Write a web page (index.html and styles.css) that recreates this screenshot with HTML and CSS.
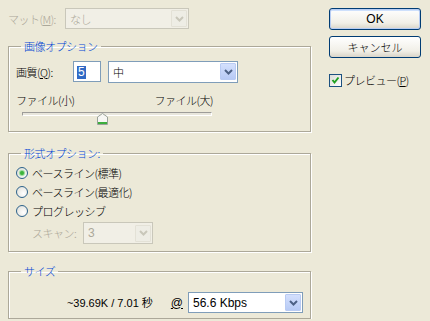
FILE: index.html
```html
<!DOCTYPE html>
<html lang="ja">
<head>
    <meta charset="UTF-8" />
    <title>JPEG オプション</title>
    <link rel="stylesheet" href="styles.css">
</head>
<body>
    <div class="dialog">
        <div class="main">
            <div class="row mat">
                <span class="label disabled">マット(<u>M</u>):</span>
                <div class="select is-disabled mat-select">
                    <span class="value">なし</span>
                    <span class="arrow">
                        <svg width="9" height="6" viewBox="0 0 9 6"><polyline points="1,1 4.5,4.5 8,1" fill="none" stroke="#c9c7ba" stroke-width="2"/></svg>
                    </span>
                </div>
            </div>

            <fieldset class="group group-image">
                <legend>画像オプション</legend>
                <div class="row quality">
                    <span class="label">画質(<u>Q</u>):</span>
                    <div class="textbox"><span class="selected latin">5</span></div>
                    <div class="select quality-select">
                        <span class="value">中</span>
                        <span class="arrow">
                            <svg width="9" height="6" viewBox="0 0 9 6"><polyline points="1,1 4.5,4.5 8,1" fill="none" stroke="#4d6185" stroke-width="2"/></svg>
                        </span>
                    </div>
                </div>
                <div class="size-labels">
                    <span>ファイル(小)</span>
                    <span>ファイル(大)</span>
                </div>
                <div class="slider">
                    <div class="track"></div>
                    <svg class="thumb" width="11" height="12" viewBox="0 0 11 12">
                        <path d="M0.5,4 L5.5,0.5 L10.5,4 V11.5 H0.5 Z" fill="#f7f7f4" stroke="#9aa29a"/>
                        <rect x="1" y="9" width="9" height="2" fill="#3dae3d"/>
                    </svg>
                </div>
            </fieldset>

            <fieldset class="group group-format">
                <legend>形式オプション:</legend>
                <div class="radio-row">
                    <span class="radio checked"></span>
                    <span>ベースライン(標準)</span>
                </div>
                <div class="radio-row">
                    <span class="radio"></span>
                    <span>ベースライン(最適化)</span>
                </div>
                <div class="radio-row">
                    <span class="radio"></span>
                    <span>プログレッシブ</span>
                </div>
                <div class="row scan">
                    <span class="label disabled">スキャン:</span>
                    <div class="select is-disabled scan-select">
                        <span class="value latin">3</span>
                        <span class="arrow">
                            <svg width="9" height="6" viewBox="0 0 9 6"><polyline points="1,1 4.5,4.5 8,1" fill="none" stroke="#c9c7ba" stroke-width="2"/></svg>
                        </span>
                    </div>
                </div>
            </fieldset>

            <fieldset class="group group-size">
                <legend>サイズ</legend>
                <div class="row estimate">
                    <span class="latin estimate-text">~39.69K / 7.01 秒</span>
                    <span class="latin at"><u>@</u></span>
                    <div class="select speed-select">
                        <span class="value latin">56.6 Kbps</span>
                        <span class="arrow">
                            <svg width="9" height="6" viewBox="0 0 9 6"><polyline points="1,1 4.5,4.5 8,1" fill="none" stroke="#4d6185" stroke-width="2"/></svg>
                        </span>
                    </div>
                </div>
            </fieldset>
        </div>

        <div class="side">
            <button class="btn btn-default latin">OK</button>
            <button class="btn">キャンセル</button>
            <div class="check-row">
                <span class="checkbox">
                    <svg width="9" height="9" viewBox="0 0 9 9"><polyline points="1.5,4 3.5,6.5 7.5,1.5" fill="none" stroke="#21a121" stroke-width="2"/></svg>
                </span>
                <span>プレビュー(<u>P</u>)</span>
            </div>
        </div>
    </div>
</body>
</html>
```

FILE: styles.css
```css
:root {
    --face: #ece9d8;
    --etch-dark: #aca899;
    --legend: #0046d5;
    --disabled: #aca899;
    --field-border: #7f9db9;
    --button-border: #003c74;
}

body {
    margin: 0;
    background: var(--face);
    font-family: "Noto Sans CJK JP", "Liberation Sans", sans-serif;
    font-size: 11px;
    font-weight: 300;
    line-height: 14px;
    color: #000;
    letter-spacing: -0.5px;
}

.latin {
    font-family: "Liberation Sans", "Noto Sans CJK JP", sans-serif;
    font-size: 12px;
    font-weight: 400;
    letter-spacing: 0;
}

u {
    text-decoration: underline;
    text-underline-offset: 1px;
}

.dialog {
    display: flex;
    gap: 18px;
    padding: 8px 0 0 8px;
}

.main {
    width: 303px;
}

.row {
    display: flex;
    align-items: center;
}

.disabled {
    color: var(--disabled);
}

/* combo boxes */
.select {
    display: flex;
    align-items: center;
    box-sizing: border-box;
    height: 21px;
    border: 1px solid var(--field-border);
    background: #fff;
    padding: 1px 1px 1px 4px;
}

.select .value {
    flex: 1;
}

.select .arrow {
    display: flex;
    align-items: center;
    justify-content: center;
    box-sizing: border-box;
    width: 16px;
    height: 17px;
    border: 1px solid #b9cbf3;
    border-radius: 1px;
    background: linear-gradient(#d4e0fd, #b7caf5);
}

.select.is-disabled {
    border-color: #c9c7ba;
    background: #f1efe6;
    color: var(--disabled);
}

.select.is-disabled .arrow {
    border-color: #e3e1d6;
    background: #eeede5;
}

.mat {
    height: 21px;
}

.mat .label {
    width: 57px;
}

.mat-select {
    width: 124px;
}

/* group boxes */
.group {
    margin: 0;
    min-width: 0;
    border: 1px solid var(--etch-dark);
    box-shadow: inset 1px 1px #fff, 1px 1px #fff;
}

.group legend {
    padding: 0 3px;
    margin-left: 5px;
    color: var(--legend);
    line-height: 14px;
}

.group-image {
    margin-top: 10px;
    padding: 8px 7px 5px;
}

.quality {
    height: 21px;
}

.quality .label {
    width: 57px;
}

.textbox {
    box-sizing: border-box;
    width: 28px;
    height: 21px;
    border: 1px solid var(--field-border);
    background: #fff;
    padding: 2px 0 0 3px;
}

.selected {
    display: inline-block;
    background: #316ac5;
    color: #fff;
    padding: 0 1px;
    line-height: 13px;
}

.quality-select {
    width: 130px;
    height: 22px;
    margin-left: 7px;
}

.size-labels {
    display: flex;
    justify-content: space-between;
    width: 197px;
    margin-top: 11px;
}

.slider {
    position: relative;
    width: 190px;
    height: 14px;
    margin-left: 6px;
}

.track {
    box-sizing: border-box;
    height: 4px;
    margin-top: 5px;
    border-top: 1px solid #9d9c99;
    border-left: 1px solid #9d9c99;
    border-bottom: 1px solid #fff;
    border-right: 1px solid #fff;
    background: #e8e6dc;
}

.thumb {
    position: absolute;
    left: 75px;
    top: 1px;
}

.group-format {
    margin-top: 14px;
    padding: 3px 7px 7px;
}

.radio-row {
    display: flex;
    align-items: center;
    gap: 4px;
    height: 19px;
}

.radio {
    box-sizing: border-box;
    width: 12px;
    height: 12px;
    border: 1px solid #2c628b;
    border-radius: 50%;
    background: radial-gradient(circle at 65% 65%, #fff, #dcdcd5);
    display: flex;
    align-items: center;
    justify-content: center;
}

.radio.checked::after {
    content: "";
    width: 4px;
    height: 4px;
    border-radius: 50%;
    background: #3cb43c;
    box-shadow: 0 0 1px 1px #8fd88f;
}

.scan {
    margin-top: 2px;
    padding-left: 16px;
}

.scan .label {
    width: 51px;
}

.scan-select {
    width: 70px;
    height: 22px;
}

.group-size {
    margin-top: 12px;
    padding: 14px 7px 5px;
}

.estimate {
    justify-content: flex-end;
}

.estimate-text {
    font-size: 11px;
    margin-right: 18px;
}

.at {
    margin-right: 5px;
}

.speed-select {
    width: 115px;
}

/* right column */
.side {
    display: flex;
    flex-direction: column;
    width: 92px;
}

.btn {
    height: 22px;
    padding: 0;
    border: 1px solid var(--button-border);
    border-radius: 3px;
    background: linear-gradient(#ffffff, #f1efe7 70%, #d9d4c8);
    font: inherit;
    color: #000;
}

.btn + .btn {
    margin-top: 6px;
}

.btn-default {
    font-family: "Liberation Sans", sans-serif;
    font-size: 12px;
    font-weight: 400;
    letter-spacing: 0;
    box-shadow: inset 0 0 0 1px #b8cdf3, inset 0 1px 0 1px #cee0fc;
}

.check-row {
    display: flex;
    align-items: center;
    gap: 2px;
    margin-top: 15px;
}

.checkbox {
    box-sizing: border-box;
    display: flex;
    align-items: center;
    justify-content: center;
    width: 13px;
    height: 13px;
    border: 1px solid #1c5180;
    background: linear-gradient(135deg, #dcdcd7, #fff);
}
```
